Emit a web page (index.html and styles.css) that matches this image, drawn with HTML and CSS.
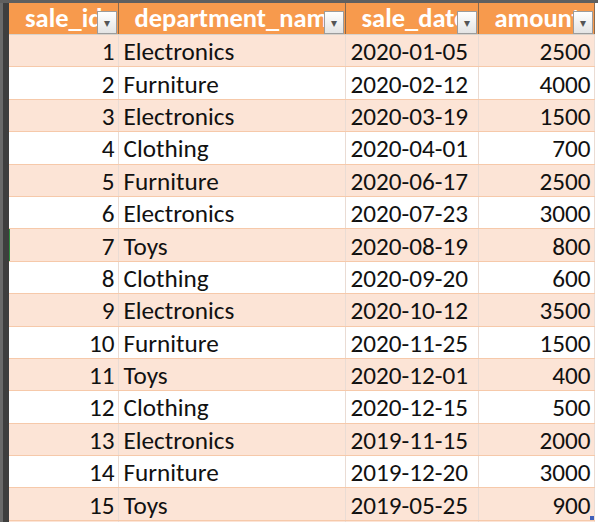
FILE: index.html
```html
<!doctype html>
<html>
<head>
<meta charset="utf-8">
<title>sales</title>
<link rel="stylesheet" href="styles.css">
</head>
<body>
<div class="sheet">
  <div class="topbar"></div>
  <div class="main">
    <div class="rowheads"></div>
    <table class="grid">
      <colgroup>
        <col class="c-id"><col class="c-dept"><col class="c-date"><col class="c-amt">
      </colgroup>
      <thead>
        <tr>
          <th><span class="hd">sale_id</span><span class="filter">&#9662;</span></th>
          <th><span class="hd">department_name</span><span class="filter">&#9662;</span></th>
          <th><span class="hd">sale_date</span><span class="filter">&#9662;</span></th>
          <th><span class="hd">amount</span><span class="filter">&#9662;</span></th>
        </tr>
      </thead>
      <tbody>
        <tr><td class="num">1</td><td>Electronics</td><td>2020-01-05</td><td class="num">2500</td></tr>
        <tr><td class="num">2</td><td>Furniture</td><td>2020-02-12</td><td class="num">4000</td></tr>
        <tr><td class="num">3</td><td>Electronics</td><td>2020-03-19</td><td class="num">1500</td></tr>
        <tr><td class="num">4</td><td>Clothing</td><td>2020-04-01</td><td class="num">700</td></tr>
        <tr><td class="num">5</td><td>Furniture</td><td>2020-06-17</td><td class="num">2500</td></tr>
        <tr><td class="num">6</td><td>Electronics</td><td>2020-07-23</td><td class="num">3000</td></tr>
        <tr class="active"><td class="num">7</td><td>Toys</td><td>2020-08-19</td><td class="num">800</td></tr>
        <tr><td class="num">8</td><td>Clothing</td><td>2020-09-20</td><td class="num">600</td></tr>
        <tr><td class="num">9</td><td>Electronics</td><td>2020-10-12</td><td class="num">3500</td></tr>
        <tr><td class="num">10</td><td>Furniture</td><td>2020-11-25</td><td class="num">1500</td></tr>
        <tr><td class="num">11</td><td>Toys</td><td>2020-12-01</td><td class="num">400</td></tr>
        <tr><td class="num">12</td><td>Clothing</td><td>2020-12-15</td><td class="num">500</td></tr>
        <tr><td class="num">13</td><td>Electronics</td><td>2019-11-15</td><td class="num">2000</td></tr>
        <tr><td class="num">14</td><td>Furniture</td><td>2019-12-20</td><td class="num">3000</td></tr>
        <tr><td class="num">15</td><td>Toys</td><td>2019-05-25</td><td class="num last">900<span class="handle"></span></td></tr>
        <tr class="peek"><td></td><td></td><td></td><td></td></tr>
      </tbody>
    </table>
  </div>
</div>
</body>
</html>
```

FILE: styles.css
```css
body { margin:0; background:#fff; font-family:"Carlito", "Open Sans", sans-serif; overflow:hidden; }

.sheet { width:598px; height:522px; overflow:hidden; }
.topbar { height:3px; background:#5f5f5f; }
.main { display:flex; }
.rowheads { width:9px; flex:none; background:linear-gradient(90deg, #6a6a6a 0, #6a6a6a 3px, #3e3e3e 3px); }

.grid { border-collapse:collapse; table-layout:fixed; width:585px; }
.c-id { width:109px; }
.c-dept { width:227px; }
.c-date { width:133px; }
.c-amt { width:116px; }

.grid th { position:relative; height:31px; padding:0 0 0 16px; background:#f79a4d; color:#fff; font-weight:bold; font-size:26.5px; text-align:left; white-space:nowrap; overflow:hidden; border-right:1px solid #8a6a4e; border-bottom:1px solid #d8d2cc; line-height:31px; }
.grid th .filter { position:absolute; right:1px; bottom:0; width:20px; height:23px; box-sizing:border-box; border:1px solid #9c9c9c; background:linear-gradient(#ffffff, #e4e4e4); color:#555; font-size:12px; line-height:22px; text-align:center; font-weight:normal; }

.grid td { height:29.4px; padding:2px 5px 0; font-size:25.2px; color:#111; white-space:nowrap; overflow:hidden; border-bottom:1px solid #f6c9aa; border-right:1px solid #eadcd4; line-height:29px; }
.grid tbody tr:nth-child(odd) td { background:#fce4d6; }
.grid tbody tr:nth-child(even) td { background:#fff; }
.grid td.num { text-align:right; padding-right:3px; }
.grid td:first-child { padding-left:0; }
.grid tr.active td:first-child { box-shadow:inset 1px 0 0 #2e8b3e; }
.grid td.last { position:relative; }
.handle { position:absolute; right:0; bottom:0; width:4px; height:4px; background:#3f5fb8; }
.grid tbody tr.peek td { height:4px; padding:0; background:#fce4d6; }
```
